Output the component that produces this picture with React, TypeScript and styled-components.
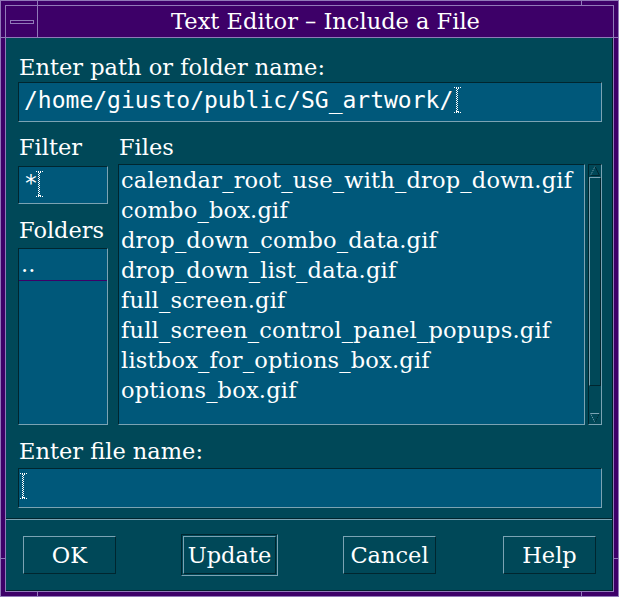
import React from "react";
import styled, { createGlobalStyle, css } from "styled-components";

const C = {
  purple: "#3d0068",
  lav: "#9179b9",
  teal: "#004858",
  field: "#00587a",
  light: "#7ba3b3",
  dark: "#00262f",
  shell: "#00202a",
  text: "#ffffff",
};

const SERIF = `"DejaVu Serif", "Liberation Serif", serif`;
const MONO = `"DejaVu Sans Mono", "Liberation Mono", monospace`;

const Global = createGlobalStyle`
  html, body { margin: 0; padding: 0; background: ${C.purple}; }
  body { width: 619px; height: 597px; overflow: hidden; }
  *, *::before, *::after { box-sizing: border-box; }
`;

const sunken = css`
  border: 1px solid;
  border-color: ${C.dark} ${C.light} ${C.light} ${C.dark};
`;

const raised = css`
  border: 1px solid;
  border-color: ${C.light} ${C.dark} ${C.dark} ${C.light};
`;

const Window = styled.div`
  position: relative;
  width: 619px;
  height: 597px;
  background: ${C.purple};
  border: 1px solid ${C.lav};
  padding: 4px;
  display: flex;
`;

const Notch = styled.span<{ $v?: boolean }>`
  position: absolute;
  background: ${C.lav};
  ${(p) =>
    p.$v
      ? css`
          width: 1px;
          height: 6px;
        `
      : css`
          width: 6px;
          height: 1px;
        `}
`;

const Frame = styled.div`
  flex: 1;
  min-width: 0;
  border: 1px solid ${C.lav};
  display: flex;
  flex-direction: column;
`;

const TitleBar = styled.div`
  height: 32px;
  flex: none;
  display: flex;
  border-bottom: 1px solid ${C.lav};
`;

const MenuCell = styled.div`
  width: 32px;
  border-right: 1px solid ${C.lav};
  display: flex;
  align-items: center;
  justify-content: center;
  padding-left: 1px;
`;

const MenuGlyph = styled.span`
  width: 24px;
  height: 4px;
  border: 1px solid ${C.lav};
`;

const Title = styled.div`
  flex: 1;
  text-align: center;
  color: ${C.text};
  font-family: ${SERIF};
  font-size: 22.5px;
  line-height: 31px;
`;

const Content = styled.div`
  flex: 1;
  display: flex;
  flex-direction: column;
  background: ${C.teal};
  border-right: 1px solid ${C.shell};
  border-bottom: 1px solid ${C.shell};
  color: ${C.text};
  font-family: ${SERIF};
  font-size: 22.5px;
`;

const Body = styled.div`
  padding: 14px 10px 10px 12px;
  display: flex;
  flex-direction: column;
`;

const Label = styled.div<{ $mt?: number }>`
  height: 30px;
  line-height: 30px;
  padding-left: 1px;
  white-space: nowrap;
  margin-top: ${(p) => p.$mt ?? 0}px;
`;

const TextField = styled.div<{ $h: number; $lh: number; $mt?: number }>`
  ${sunken};
  height: ${(p) => p.$h}px;
  margin-top: ${(p) => p.$mt ?? 0}px;
  background: ${C.field};
  font-family: ${MONO};
  font-size: 23px;
  line-height: ${(p) => p.$lh}px;
  padding-left: 5px;
  white-space: nowrap;
  overflow: hidden;
`;

const Cursor = styled.svg<{ $ml?: number; $va?: number }>`
  display: inline-block;
  width: 7px;
  height: 26px;
  margin-left: ${(p) => p.$ml ?? 0}px;
  vertical-align: ${(p) => p.$va ?? -5}px;
`;

const MidGrid = styled.div`
  margin-top: 10px;
  display: grid;
  grid-template-columns: 90px 1fr;
  column-gap: 10px;
  height: 293px;
`;

const Column = styled.div`
  display: flex;
  flex-direction: column;
  min-width: 0;
`;

const ListRow = styled.div`
  margin-top: 2px;
  flex: 1;
  display: flex;
  gap: 3px;
  min-height: 0;
`;

const ListBox = styled.div<{ $mt?: number }>`
  ${sunken};
  margin-top: ${(p) => p.$mt ?? 0}px;
  flex: 1;
  min-width: 0;
  background: ${C.field};
  overflow: hidden;
`;

const ListItem = styled.div`
  line-height: 30px;
  padding-left: 2px;
  letter-spacing: 0.2px;
  white-space: nowrap;
`;

const FocusItem = styled.div`
  margin: -1px -1px 0 -1px;
  border: 1px solid ${C.purple};
  line-height: 31px;
  padding-left: 2px;
  white-space: nowrap;
`;

const ScrollBar = styled.div`
  ${sunken};
  width: 14px;
  background: ${C.teal};
  display: flex;
  flex-direction: column;
`;

const Arrow = styled.svg<{ $h: number }>`
  display: block;
  width: 12px;
  height: ${(p) => p.$h}px;
  flex: none;
`;

const Slider = styled.div<{ $h: number }>`
  ${raised};
  height: ${(p) => p.$h}px;
  flex: none;
`;

const Trough = styled.div`
  flex: 1;
`;

const ButtonBar = styled.div`
  flex: 1;
  display: flex;
  align-items: center;
  justify-content: space-between;
  padding: 1px 16px 0 17px;
  border-top: 1px solid ${C.dark};
  box-shadow: inset 0 1px 0 ${C.light};
`;

const Button = styled.button<{ $default?: boolean }>`
  position: relative;
  width: 93px;
  height: 38px;
  ${raised};
  background: ${C.teal};
  color: ${C.text};
  font-family: ${SERIF};
  font-size: 22.5px;
  padding: 0;
  line-height: 34px;
  ${(p) =>
    p.$default &&
    css`
      &::before {
        content: "";
        position: absolute;
        inset: -3px;
        border: 1px solid;
        border-color: ${C.dark} ${C.light} ${C.light} ${C.dark};
      }
    `}
`;

const IBeam = ({ ml, va }: { ml?: number; va?: number }) => (
  <Cursor $ml={ml} $va={va} viewBox="0 0 7 26">
    <g stroke="#ffffff" strokeWidth="1" strokeDasharray="1 1" fill="none">
      <line x1="0" y1="0.5" x2="7" y2="0.5" />
      <line x1="1" y1="1.5" x2="6" y2="1.5" strokeDashoffset="1" />
      <line x1="2.5" y1="1" x2="2.5" y2="25" />
      <line x1="3.5" y1="1" x2="3.5" y2="25" strokeDashoffset="1" />
      <line x1="1" y1="24.5" x2="6" y2="24.5" strokeDashoffset="1" />
      <line x1="0" y1="25.5" x2="7" y2="25.5" />
    </g>
  </Cursor>
);

const files = [
  "calendar_root_use_with_drop_down.gif",
  "combo_box.gif",
  "drop_down_combo_data.gif",
  "drop_down_list_data.gif",
  "full_screen.gif",
  "full_screen_control_panel_popups.gif",
  "listbox_for_options_box.gif",
  "options_box.gif",
];

export default function App() {
  return (
    <>
      <Global />
      <Window>
        <Notch $v style={{ left: 36, top: -1 }} />
        <Notch $v style={{ left: 580, top: -1 }} />
        <Notch $v style={{ left: 36, bottom: -1 }} />
        <Notch $v style={{ left: 580, bottom: -1 }} />
        <Notch style={{ top: 36, left: -1 }} />
        <Notch style={{ top: 557, left: -1 }} />
        <Notch style={{ top: 36, right: -1 }} />
        <Notch style={{ top: 557, right: -1 }} />
        <Frame>
          <TitleBar>
            <MenuCell>
              <MenuGlyph />
            </MenuCell>
            <Title>Text Editor – Include a File</Title>
          </TitleBar>
          <Content>
            <Body>
              <Label>Enter path or folder name:</Label>
              <TextField $h={40} $lh={34}>
                /home/giusto/public/SG_artwork/
                <IBeam ml={1} />
              </TextField>
              <MidGrid>
                <Column>
                  <Label>Filter</Label>
                  <TextField $h={38} $lh={32} $mt={4}>
                    *
                    <IBeam ml={-2} va={-6} />
                  </TextField>
                  <Label $mt={11}>Folders</Label>
                  <ListBox $mt={3}>
                    <FocusItem>..</FocusItem>
                  </ListBox>
                </Column>
                <Column>
                  <Label>Files</Label>
                  <ListRow>
                    <ListBox>
                      {files.map((f) => (
                        <ListItem key={f}>{f}</ListItem>
                      ))}
                    </ListBox>
                    <ScrollBar>
                      <Arrow $h={12} viewBox="0 0 12 12">
                        <path d="M6 1.5 L1.5 10.5" stroke={C.light} strokeDasharray="1 1" fill="none" />
                        <path d="M6 1.5 L10.5 10.5" stroke={C.dark} fill="none" />
                        <path d="M1.5 10.5 H10.5" stroke={C.dark} fill="none" />
                      </Arrow>
                      <Slider $h={209} />
                      <Trough />
                      <Arrow $h={11} viewBox="0 0 12 11">
                        <path d="M1.5 0.5 H10.5" stroke={C.light} fill="none" />
                        <path d="M1.5 0.5 L6 9.5" stroke={C.light} strokeDasharray="1 1" fill="none" />
                        <path d="M10.5 0.5 L6 9.5" stroke={C.dark} strokeDasharray="1 1" fill="none" />
                      </Arrow>
                    </ScrollBar>
                  </ListRow>
                </Column>
              </MidGrid>
              <Label $mt={11}>Enter file name:</Label>
              <TextField $h={40} $lh={34} $mt={2}>
                <IBeam ml={-4} />
              </TextField>
            </Body>
            <ButtonBar>
              <Button>OK</Button>
              <Button $default>Update</Button>
              <Button>Cancel</Button>
              <Button>Help</Button>
            </ButtonBar>
          </Content>
        </Frame>
      </Window>
    </>
  );
}
